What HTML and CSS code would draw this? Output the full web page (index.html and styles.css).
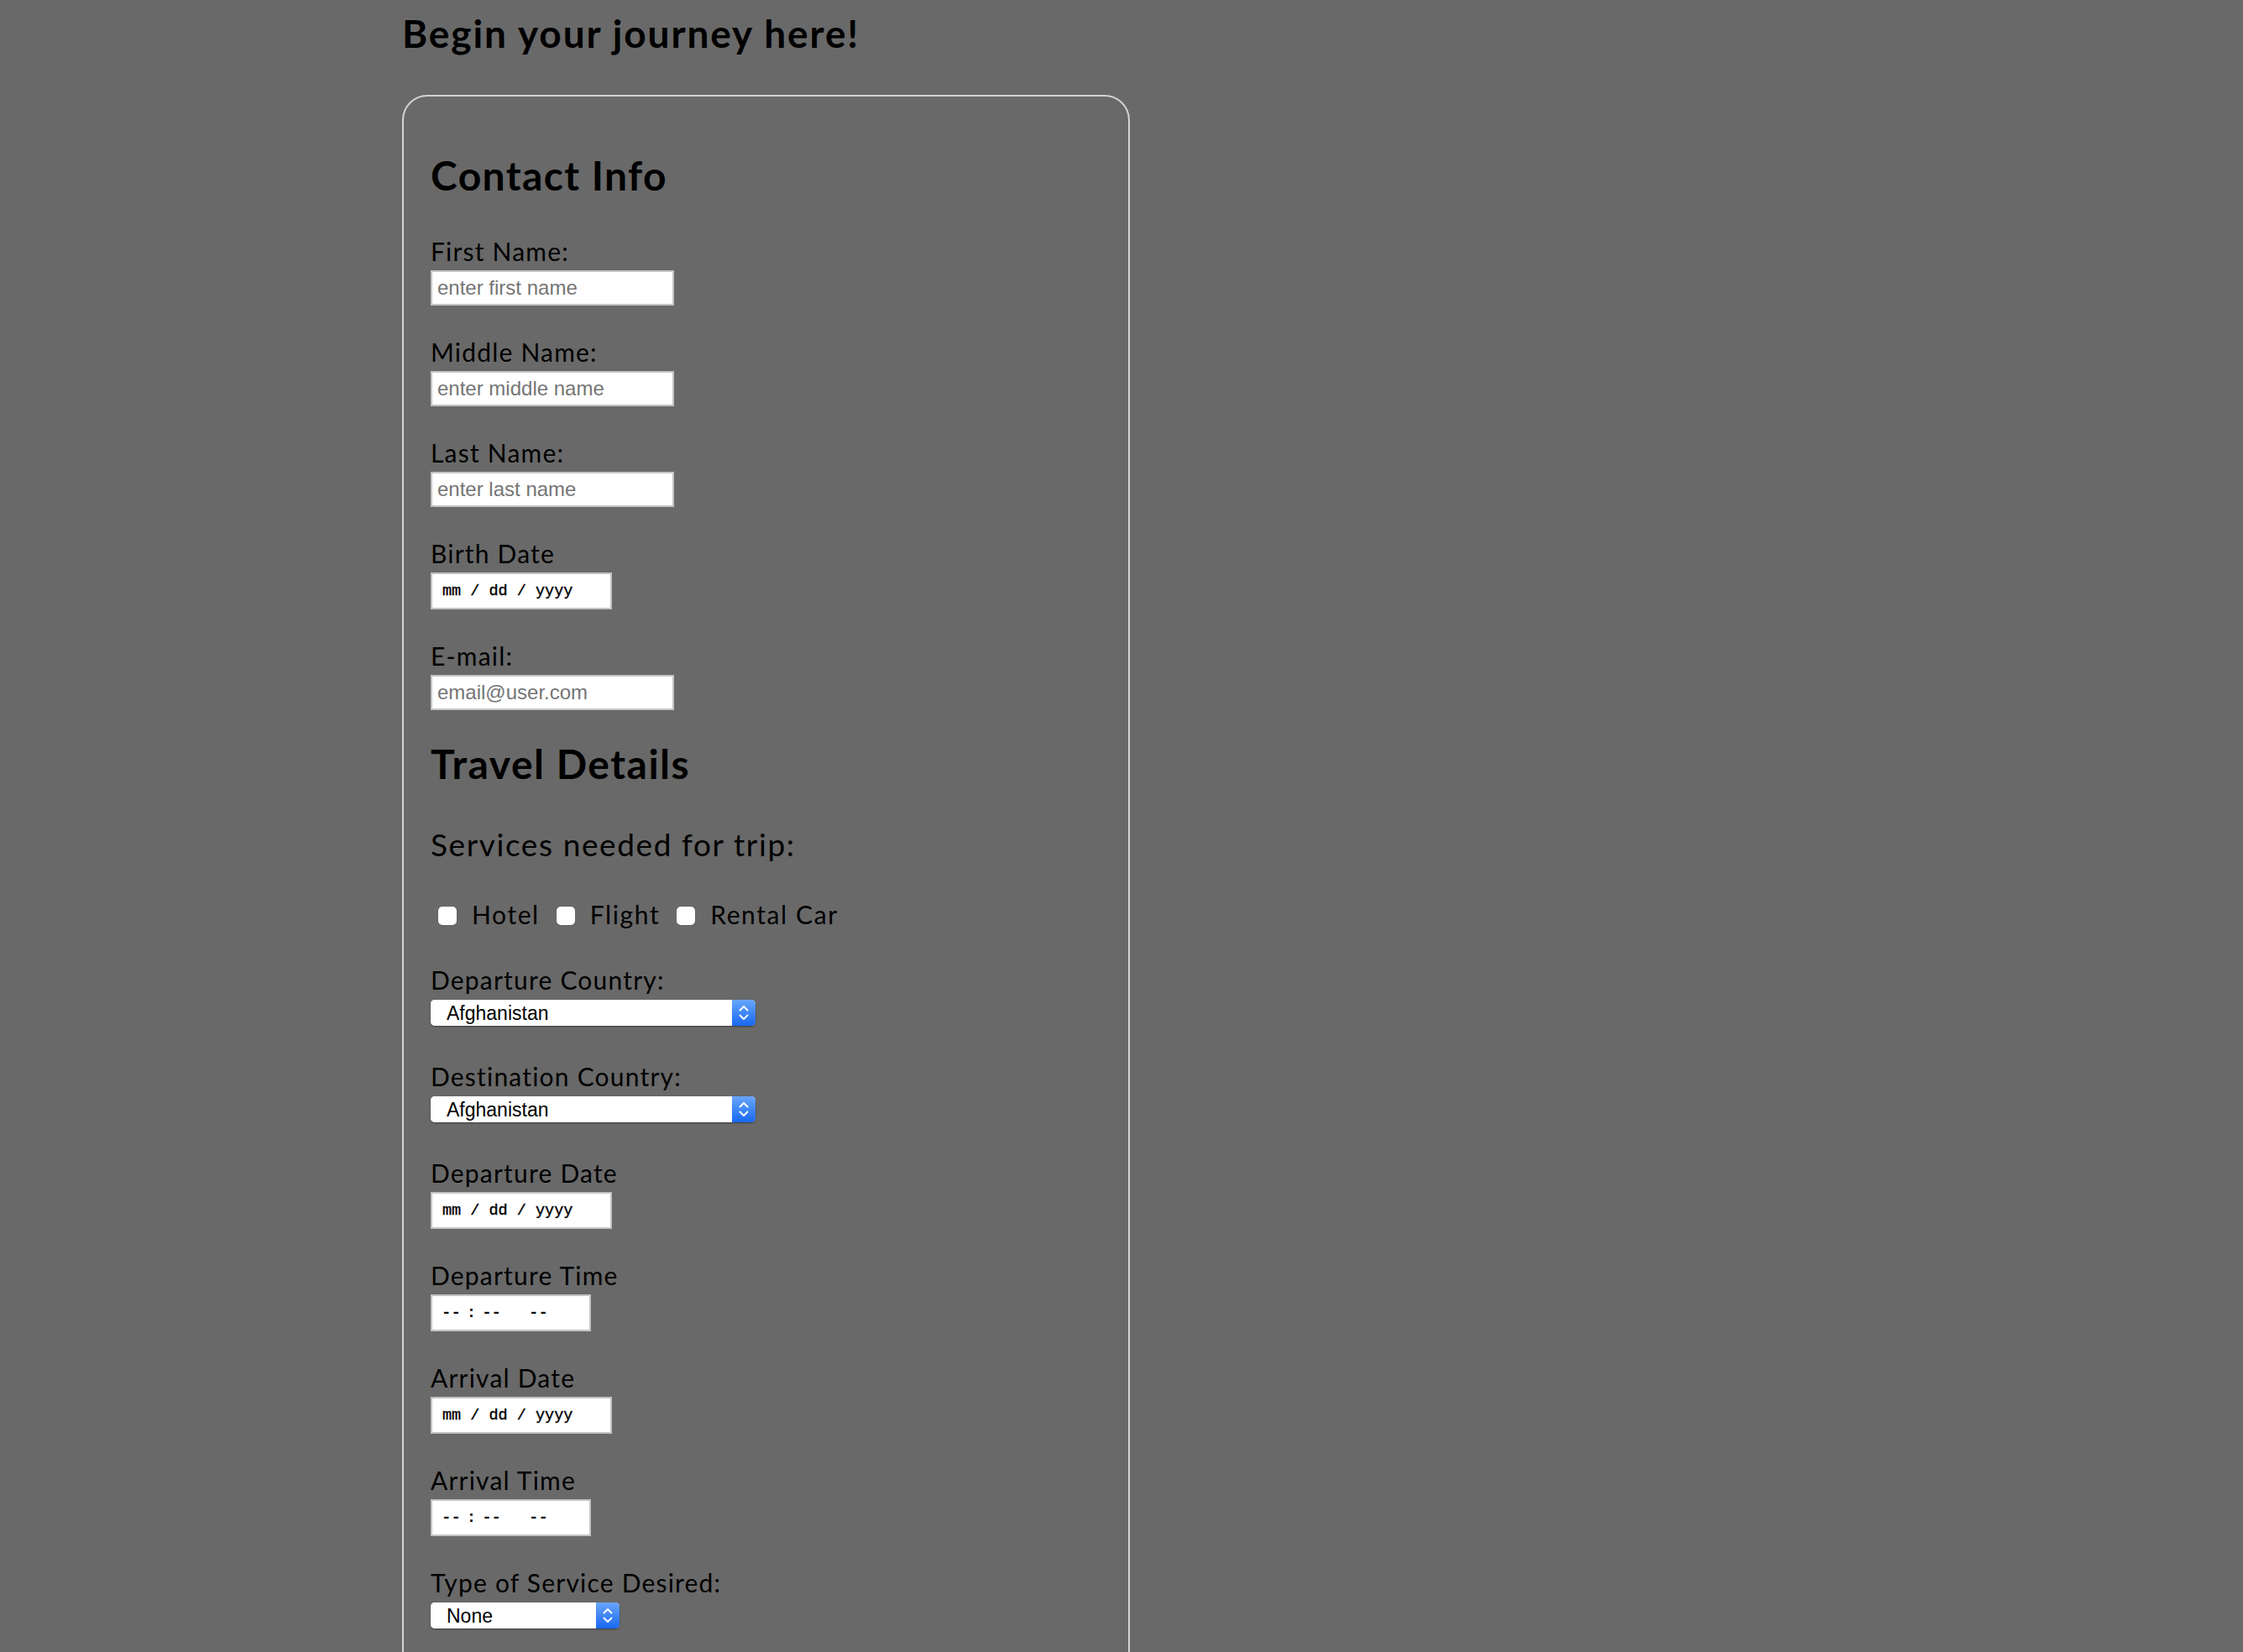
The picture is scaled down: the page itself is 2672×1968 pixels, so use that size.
FILE: index.html
```html
<!DOCTYPE html>
<html lang="en">
<head>
<meta charset="utf-8">
<title>Begin your journey here!</title>
<link rel="stylesheet" href="styles.css">
</head>
<body>
<main class="page">
  <h1 class="title">Begin your journey here!</h1>
  <form class="card">
    <section class="section">
      <h2 class="section-title">Contact Info</h2>
      <div class="field field-text">
        <label class="label" for="first">First Name:</label>
        <input class="text-input" type="text" id="first" placeholder="enter first name">
      </div>
      <div class="field field-text">
        <label class="label" for="middle">Middle Name:</label>
        <input class="text-input" type="text" id="middle" placeholder="enter middle name">
      </div>
      <div class="field field-text">
        <label class="label" for="last">Last Name:</label>
        <input class="text-input" type="text" id="last" placeholder="enter last name">
      </div>
      <div class="field field-date">
        <label class="label" for="birth">Birth Date</label>
        <input class="date-input" type="text" id="birth" placeholder="mm / dd / yyyy">
      </div>
      <div class="field field-text">
        <label class="label" for="email">E-mail:</label>
        <input class="text-input" type="email" id="email" placeholder="email@user.com">
      </div>
    </section>

    <section class="section">
      <h2 class="section-title">Travel Details</h2>
      <h3 class="sub-title">Services needed for trip:</h3>
      <div class="checks">
        <label class="check"><input class="check-box" type="checkbox"><span>Hotel</span></label>
        <label class="check"><input class="check-box" type="checkbox"><span>Flight</span></label>
        <label class="check"><input class="check-box" type="checkbox"><span>Rental Car</span></label>
      </div>

      <div class="field field-select">
        <label class="label" for="dep-country">Departure Country:</label>
        <div class="select select-wide">
          <select class="select-field" id="dep-country"><option>Afghanistan</option></select>
          <span class="stepper"><svg viewBox="0 0 28 31" width="28" height="31"><path d="M9.5 12.5 L14 8 L18.5 12.5 M9.5 18.5 L14 23 L18.5 18.5" fill="none" stroke="#fff" stroke-width="2" stroke-linecap="round" stroke-linejoin="round"/></svg></span>
        </div>
      </div>
      <div class="field field-select">
        <label class="label" for="dest-country">Destination Country:</label>
        <div class="select select-wide">
          <select class="select-field" id="dest-country"><option>Afghanistan</option></select>
          <span class="stepper"><svg viewBox="0 0 28 31" width="28" height="31"><path d="M9.5 12.5 L14 8 L18.5 12.5 M9.5 18.5 L14 23 L18.5 18.5" fill="none" stroke="#fff" stroke-width="2" stroke-linecap="round" stroke-linejoin="round"/></svg></span>
        </div>
      </div>
      <div class="field field-date">
        <label class="label" for="dep-date">Departure Date</label>
        <input class="date-input" type="text" id="dep-date" placeholder="mm / dd / yyyy">
      </div>
      <div class="field field-date">
        <label class="label">Departure Time</label>
        <div class="time-input"><span>--</span><span class="colon">:</span><span>--</span><span class="ampm">--</span></div>
      </div>
      <div class="field field-date">
        <label class="label" for="arr-date">Arrival Date</label>
        <input class="date-input" type="text" id="arr-date" placeholder="mm / dd / yyyy">
      </div>
      <div class="field field-date">
        <label class="label">Arrival Time</label>
        <div class="time-input"><span>--</span><span class="colon">:</span><span>--</span><span class="ampm">--</span></div>
      </div>
      <div class="field field-select">
        <label class="label" for="service">Type of Service Desired:</label>
        <div class="select select-narrow">
          <select class="select-field" id="service"><option>None</option></select>
          <span class="stepper"><svg viewBox="0 0 28 31" width="28" height="31"><path d="M9.5 12.5 L14 8 L18.5 12.5 M9.5 18.5 L14 23 L18.5 18.5" fill="none" stroke="#fff" stroke-width="2" stroke-linecap="round" stroke-linejoin="round"/></svg></span>
        </div>
      </div>
    </section>
  </form>
</main>
</body>
</html>
```

FILE: styles.css
```css
* { box-sizing: border-box; }

html, body {
  margin: 0;
  padding: 0;
  background: #696969;
}

body {
  font-family: "Lato", "Open Sans", sans-serif;
  color: #000;
}

.page {
  padding: 12px 0 0 479px;
}

.title {
  margin: 0;
  font-size: 46px;
  line-height: 56px;
  font-weight: 700;
  letter-spacing: 1.9px;
}

.card {
  margin-top: 45px;
  width: 867px;
  border: 2px solid #d4d4d4;
  border-radius: 30px;
  padding: 65px 32px 120px;
}

.section {
  display: flex;
  flex-direction: column;
  align-items: flex-start;
}

.section + .section {
  margin-top: 35px;
}

.section-title {
  margin: 0 0 45px;
  font-size: 48px;
  line-height: 58px;
  font-weight: 700;
  letter-spacing: 1.4px;
}

.section + .section .section-title {
  letter-spacing: 1.5px;
}

.sub-title {
  margin: 0 0 45px;
  font-size: 37px;
  line-height: 44px;
  font-weight: 400;
  letter-spacing: 1.6px;
}

.field {
  display: flex;
  flex-direction: column;
  align-items: flex-start;
  margin-bottom: 39px;
}

.section:first-child .field:last-child {
  margin-bottom: 0;
}

.label {
  display: block;
  height: 33px;
  font-size: 30px;
  line-height: 33px;
  letter-spacing: 1.2px;
  margin-bottom: 6px;
}

.text-input {
  width: 290px;
  height: 42px;
  border: 2px solid #c4c4c4;
  border-radius: 0;
  padding: 0 6px;
  background: #fff;
  font-family: "Liberation Sans", Arial, sans-serif;
  font-size: 24px;
  color: #000;
  outline: none;
}

.text-input::placeholder {
  color: #757575;
}

.date-input {
  width: 216px;
  height: 44px;
  border: 2px solid #c4c4c4;
  border-radius: 0;
  padding: 0 0 0 12px;
  background: #fff;
  font-family: "Liberation Mono", monospace;
  font-size: 18.5px;
  color: #000;
  outline: none;
  -webkit-text-stroke: 0.4px #000;
}

.date-input::placeholder {
  color: #000;
}

.time-input {
  display: flex;
  align-items: center;
  width: 191px;
  height: 44px;
  border: 2px solid #c4c4c4;
  padding: 0 0 0 11px;
  background: #fff;
  font-family: "Liberation Mono", monospace;
  font-size: 19px;
  font-weight: 700;
  color: #000;
  white-space: pre;
}

.time-input .colon {
  margin: 0 7px;
}

.time-input .ampm {
  margin-left: 33px;
}

.field-select {
  margin-bottom: 44px;
}

.field-select .label {
  margin-bottom: 7px;
}

.select {
  display: flex;
  height: 31px;
  border-radius: 5px;
  background: #fff;
  box-shadow: 0 1px 2px rgba(0, 0, 0, 0.45);
  overflow: hidden;
}

.select-wide { width: 387px; }
.select-narrow { width: 225px; }

.select-field {
  flex: 1;
  min-width: 0;
  appearance: none;
  -webkit-appearance: none;
  border: 0;
  background: #fff;
  padding: 0 0 0 19px;
  font-family: "Liberation Sans", Arial, sans-serif;
  font-size: 23px;
  color: #000;
  outline: none;
}

.stepper {
  display: block;
  width: 28px;
  height: 31px;
  background: linear-gradient(#68a6fa, #1868f2);
}

.stepper svg {
  display: block;
}

.checks {
  display: flex;
  align-items: center;
  gap: 20px;
  height: 33px;
  margin: 0 0 45px 9px;
}

.check {
  display: flex;
  align-items: center;
  font-size: 30px;
  line-height: 33px;
  letter-spacing: 1.6px;
}

.check-box {
  appearance: none;
  -webkit-appearance: none;
  width: 22px;
  height: 22px;
  margin: 3px 18px 0 0;
  border-radius: 5px;
  background: #fff;
  box-shadow: 0 0 1px rgba(0, 0, 0, 0.4);
}
```
